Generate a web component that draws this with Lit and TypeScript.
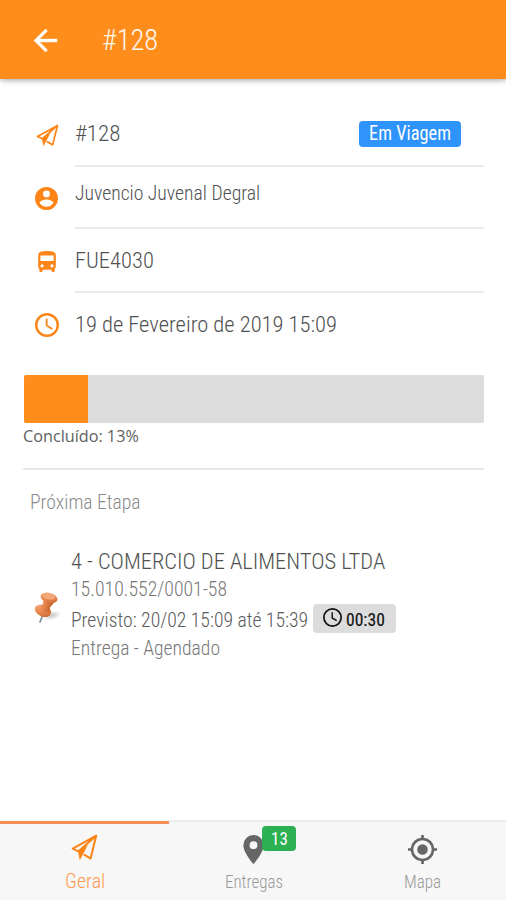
import { LitElement, html, css, svg } from "lit";
import { customElement, property } from "lit/decorators.js";

/** One line of narrow text, squeezed or stretched to a given width. */
@customElement("narrow-text")
class NarrowText extends LitElement {
  @property() text = "";
  @property({ type: Number }) width = 100;

  static styles = css`
    :host { display: block; flex: none; white-space: nowrap; }
    span { display: inline-block; transform-origin: 0 50%; vertical-align: top; }
  `;

  updated() {
    const span = this.renderRoot.querySelector("span") as HTMLElement;
    this.style.width = this.width + "px";
    const natural = span.offsetWidth;
    if (natural) span.style.transform = `scaleX(${this.width / natural})`;
  }

  render() {
    return html`<span>${this.text}</span>`;
  }
}

const icon = (box: string, body: unknown) =>
  html`<svg viewBox=${box} fill="currentColor" aria-hidden="true">${body}</svg>`;

const plane = () => icon("0 0 24 24", svg`
  <path fill="none" stroke="currentColor" stroke-width="1.8" stroke-linejoin="round" d="M22.4 1.500 1.500 13l5.200 2.400L22.400 1.500 17.400 21.800l-6-3.600"/>
  <path d="M15 9.500 10.800 17.800 7.800 23.300 6.200 15.400Z"/>`);
const person = () => icon("2 2 20 20", svg`
  <path fill-rule="evenodd" d="M12 2a10 10 0 1 0 0 20 10 10 0 0 0 0-20zm0 3a3 3 0 1 1 0 6 3 3 0 0 1 0-6zm0 14.2a7.2 7.2 0 0 1-6-3.22c.03-1.99 4-3.08 6-3.08s5.97 1.09 6 3.08a7.2 7.2 0 0 1-6 3.22z"/>`);
const bus = () => icon("4 2 16 20", svg`
  <path fill-rule="evenodd" d="M4 16c0 .88.39 1.67 1 2.22V20a1 1 0 0 0 1 1h1a1 1 0 0 0 1-1v-1h8v1a1 1 0 0 0 1 1h1a1 1 0 0 0 1-1v-1.78c.61-.55 1-1.34 1-2.22V6c0-3.5-3.58-4-8-4s-8 .5-8 4v10zm3.500 1a1.500 1.500 0 1 1 0-3 1.500 1.500 0 0 1 0 3zm9 0a1.500 1.500 0 1 1 0-3 1.500 1.500 0 0 1 0 3zM18 11H6V6h12v5z"/>`);
const clock = (w = 2) => icon("2 2 20 20", svg`
  <circle cx="12" cy="12" r=${10 - w / 2} fill="none" stroke="currentColor" stroke-width=${w}/>
  <path fill="none" stroke="currentColor" stroke-width="1.500" d="M11.700 6.500v6l4.700 2.800"/>`);
const arrow = () => icon("4 4 16 16", svg`
  <path d="M20 11H7.830l5.590-5.590L12 4l-8 8 8 8 1.410-1.410L7.830 13H20z" stroke="currentColor" stroke-width=".3"/>`);
const pin = () => icon("5 2 14 20", svg`
  <path fill-rule="evenodd" d="M12 2a7 7 0 0 0-7 7c0 5.250 7 13 7 13s7-7.750 7-13a7 7 0 0 0-7-7zm0 9.700a2.700 2.700 0 1 1 0-5.400 2.700 2.700 0 0 1 0 5.400z"/>`);
const locate = () => icon("1 1 22 22", svg`
  <path fill-rule="evenodd" d="M12 8a4 4 0 1 0 0 8 4 4 0 0 0 0-8zm8.940 3A8.990 8.990 0 0 0 13 3.060V1h-2v2.060A8.990 8.990 0 0 0 3.060 11H1v2h2.060A8.990 8.990 0 0 0 11 20.940V23h2v-2.060A8.990 8.990 0 0 0 20.940 13H23v-2h-2.060zM12 19a7 7 0 1 1 0-14 7 7 0 0 1 0 14z"/>`);
const pushpin = () => html`<svg viewBox="0 0 28 32" aria-hidden="true">
  <defs>
    <linearGradient id="cap" x1="0" y1="0" x2="1" y2="1">
      <stop offset="0" stop-color="#f7b183"/><stop offset=".5" stop-color="#ea8a50"/><stop offset="1" stop-color="#c4602c"/>
    </linearGradient>
    <linearGradient id="stem" x1="0" y1="0" x2="1" y2=".3">
      <stop offset="0" stop-color="#f6aa7c"/><stop offset=".5" stop-color="#e5854c"/><stop offset="1" stop-color="#bd5a28"/>
    </linearGradient>
    <radialGradient id="shade"><stop offset="0" stop-color="#999" stop-opacity=".55"/><stop offset="1" stop-color="#999" stop-opacity="0"/></radialGradient>
  </defs>
  <ellipse cx="18" cy="23.500" rx="10" ry="4.500" fill="url(#shade)" transform="rotate(-12 18 23.500)"/>
  <path d="m8.800 23-2.800 7" stroke="#8494a3" stroke-width="1.800" stroke-linecap="round"/>
  <ellipse cx="9" cy="18.800" rx="8.600" ry="5.800" fill="url(#cap)" transform="rotate(22 9 18.800)"/>
  <path d="M9.500 5.500 9 12 4.500 15.500c1.500 4.500 7 6 11.200 4.500L16 15.500 20.500 10Z" fill="url(#stem)"/>
  <ellipse cx="15" cy="5.800" rx="8.700" ry="4.900" fill="url(#cap)" transform="rotate(14 15 5.800)"/>
  <ellipse cx="15" cy="4.500" rx="6.500" ry="2.900" fill="#f4a678" transform="rotate(14 15 4.500)"/>
</svg>`;

@customElement("app-root")
class AppRoot extends LitElement {
  @property({ type: Number }) done = 13;

  static styles = css`
    :host {
      display: flex; flex-direction: column; height: 900px; box-sizing: border-box;
      background: #fff; color: #505050; overflow: hidden;
      font-family: "Roboto Condensed", Roboto, sans-serif; font-stretch: 75%; font-weight: 300;
      font-size: 20px; line-height: 28px;
    }
    svg { display: block; width: 100%; height: 100%; overflow: visible; }
    .ico { flex: none; color: #fd8416; }
    header {
      flex: none; height: 79px; box-sizing: border-box; background: #ff8d1c; color: #fff;
      display: flex; align-items: center; padding-left: 34px; padding-top: 1px;
      box-shadow: 0 1px 6px rgba(0, 0, 0, .38);
    }
    .back { width: 23px; height: 23px; color: #fff; }
    .title { font-size: 29px; line-height: 36px; margin-left: 45px; font-weight: 350; color: #fff8ee; }
    main { flex: 1; padding: 25px 22px 0 23px; }
    .row { display: grid; grid-template-columns: 52px 1fr; }
    .cell { height: 61px; display: flex; align-items: center; justify-content: space-between; border-bottom: 2px solid #ebebeb; }
    .row .ico { justify-self: start; align-self: center; }
    .big { font-size: 22.500px; }
    .r1 .big { margin-top: -4px; }
    .r2 .cell { height: 52px; padding-bottom: 8px; }
    .r4 .cell { border-bottom-color: transparent; }
    .r3 .cell { height: 62px; }
    .r4 .cell { height: 61px; }
    .plane { width: 23px; height: 23px; margin: 0 0 0 13px; }
    .person { width: 23px; height: 23px; margin: 0 0 0 12px; }
    .bus { width: 20px; height: 22px; margin: 2px 0 0 14px; }
    .clock { width: 24px; height: 24px; margin: 1px 0 0 12px; }
    .status {
      width: 102px; height: 26px; line-height: 26px; border-radius: 4px; background: #2e93fb; color: #fff;
      display: flex; justify-content: center; font-size: 19.500px; font-weight: 400; margin: 0 23px 2px 0;
    }
    .progress { margin: 19px 0 0 1px; height: 48px; border-radius: 2px; background: #dcdcdc; overflow: hidden; }
    .bar { box-sizing: content-box; height: 100%; background: #ff8d1c; border-right: 4px solid #ff8d1c; }
    .done { font: 400 15.500px/24px "Open Sans", sans-serif; margin-top: 1px; color: #606060; }
    .rule { height: 2px; background: #e8e8e8; margin-top: 20px; }
    .section { color: #8a8a8a; margin: 18px 0 0 7px; }
    .stop { display: flex; margin-top: 31px; }
    .pushpin { width: 28px; height: 32px; margin: 45px 9px 0 11px; }
    .stop .big { line-height: 29px; }
    .stop .sub { color: #777; line-height: 27px; }
    .when { display: flex; align-items: center; height: 33px; color: #5a5a5a; }
    .due { margin-top: 1px; }
    .time {
      display: flex; align-items: center; gap: 4px; margin-left: 5px; width: 83px; height: 29px; margin-top: -2px;
      box-sizing: border-box; padding-left: 10px; border-radius: 4px; background: #dcdcdc; color: #111;
      font-size: 18.500px; font-weight: 400; -webkit-text-stroke: .15px #111;
    }
    .tiny { width: 19px; height: 19px; color: #111; margin-top: -2px; }
    .time narrow-text { margin-top: 2px; }
    .stop .last { margin-top: -1px; }
    nav { flex: none; height: 80px; display: grid; grid-template-columns: 169px 169px 168px; background: #f7f7f7; }
    .tab { display: flex; flex-direction: column; align-items: center; border-top: 2px solid #ececec; color: #999; font-size: 17.500px; }
    .tab .ico { color: #666; margin-top: 13px; height: 29px; }
    .tab .lbl { margin-top: 4px; }
    .tab.on { border-top: 3px solid #f68d54; color: #ff9a50; font-size: 19.500px; margin-top: 1px; }
    .tab.on .ico { color: #fd8416; width: 27px; height: 27px; margin-top: 10px; }
    .tab.on .lbl { margin-top: 7px; }
    .spot { position: relative; width: 21px; }
    .aim { width: 29px; }
    .count {
      position: absolute; left: 19px; top: -9px; width: 34px; height: 25px; line-height: 25px; border-radius: 4px;
      background: #2bb152; color: #fff; display: flex; justify-content: center; font-size: 19px; font-weight: 400;
    }
  `;

  render() {
    return html`
      <header>
        <div class="ico back">${arrow()}</div>
        <narrow-text class="title" text="#128" width="56"></narrow-text>
      </header>
      <main>
        <div class="row r1">
          <div class="ico plane">${plane()}</div>
          <div class="cell">
            <narrow-text class="big" text="#128" width="45"></narrow-text>
            <div class="status"><narrow-text text="Em Viagem" width="82"></narrow-text></div>
          </div>
        </div>
        <div class="row r2">
          <div class="ico person">${person()}</div>
          <div class="cell"><narrow-text text="Juvencio Juvenal Degral" width="185"></narrow-text></div>
        </div>
        <div class="row r3">
          <div class="ico bus">${bus()}</div>
          <div class="cell"><narrow-text class="big" text="FUE4030" width="79"></narrow-text></div>
        </div>
        <div class="row r4">
          <div class="ico clock">${clock()}</div>
          <div class="cell"><narrow-text class="big" text="19 de Fevereiro de 2019 15:09" width="262"></narrow-text></div>
        </div>
        <div class="progress"><div class="bar" style="width:${this.done}%"></div></div>
        <narrow-text class="done" text="Concluído: ${this.done}%" width="116"></narrow-text>
        <div class="rule"></div>
        <narrow-text class="section" text="Próxima Etapa" width="111"></narrow-text>
        <div class="stop">
          <div class="pushpin">${pushpin()}</div>
          <div>
            <narrow-text class="big" text="4 - COMERCIO DE ALIMENTOS LTDA" width="314"></narrow-text>
            <narrow-text class="sub" text="15.010.552/0001-58" width="156"></narrow-text>
            <div class="when">
              <narrow-text class="due" text="Previsto: 20/02 15:09 até 15:39" width="237"></narrow-text>
              <div class="time"><div class="tiny">${clock(1.8)}</div><narrow-text text="00:30" width="39"></narrow-text></div>
            </div>
            <narrow-text class="sub last" text="Entrega - Agendado" width="149"></narrow-text>
          </div>
        </div>
      </main>
      <nav>
        <div class="tab on"><div class="ico">${plane()}</div><narrow-text class="lbl" text="Geral" width="40"></narrow-text></div>
        <div class="tab">
          <div class="ico spot">${pin()}<div class="count"><narrow-text text="13" width="17"></narrow-text></div></div>
          <narrow-text class="lbl" text="Entregas" width="58"></narrow-text>
        </div>
        <div class="tab"><div class="ico aim">${locate()}</div><narrow-text class="lbl" text="Mapa" width="37"></narrow-text></div>
      </nav>
    `;
  }
}
